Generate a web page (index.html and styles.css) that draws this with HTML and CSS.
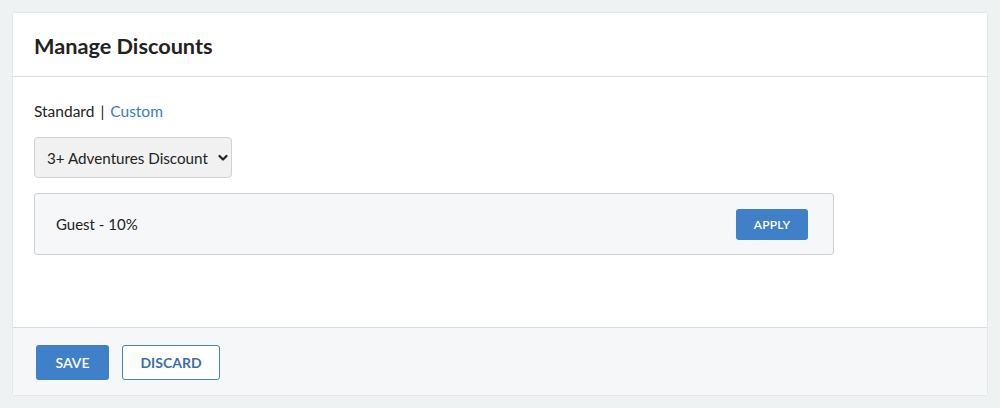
FILE: index.html
```html
<!DOCTYPE html>
<html lang="en">
<head>
<meta charset="utf-8">
<title>Manage Discounts</title>
<link rel="stylesheet" href="styles.css">
</head>
<body>
<div class="card">
  <div class="card-header">
    <h1 class="title">Manage Discounts</h1>
  </div>
  <div class="card-body">
    <div class="tabs">
      <span class="tab-active">Standard</span>
      <span class="sep">|</span>
      <a class="tab-link" href="#">Custom</a>
    </div>
    <div class="select-wrap">
      <select class="select">
        <option>3+ Adventures Discount</option>
      </select>
      <svg class="chev" width="10" height="8" viewBox="0 0 10 8"><path d="M1.5 2 L5 5.5 L8.5 2" fill="none" stroke="#222" stroke-width="2.2" stroke-linecap="round" stroke-linejoin="round"/></svg>
    </div>
    <div class="panel">
      <span class="panel-text">Guest - 10%</span>
      <button class="btn btn-apply">Apply</button>
    </div>
  </div>
  <div class="card-footer">
    <button class="btn btn-primary">Save</button>
    <button class="btn btn-outline">Discard</button>
  </div>
</div>
</body>
</html>
```
FILE: styles.css
```css
* { box-sizing: border-box; }
html, body { margin: 0; }
body {
  background: #eef2f3;
  padding: 12px 12px 12px 12px;
  font-family: Lato, "Open Sans", Arial, sans-serif;
  color: #222;
}
.card {
  width: 976px;
  height: 384px;
  background: #fff;
  border: 1px solid #e3e7ea;
  border-radius: 3px;
  display: flex;
  flex-direction: column;
}
.card-header {
  height: 64px;
  border-bottom: 1px solid #d9dcdf;
  display: flex;
  align-items: center;
  padding: 0 21px;
}
.title {
  margin: 0;
  font-size: 21.7px;
  font-weight: 700;
  color: #222;
  padding-top: 2px;
}
.card-body {
  flex: 1;
  padding: 24px 21px 0 21px;
}
.tabs {
  font-size: 15.5px;
  line-height: 20px;
  display: flex;
  gap: 6px;
  color: #222;
}
.tab-link {
  color: #3a7cc4;
  text-decoration: none;
}
.select-wrap {
  position: relative;
  width: 198px;
  margin-top: 16px;
}
.select {
  appearance: none;
  -webkit-appearance: none;
  width: 198px;
  height: 41px;
  border: 1px solid #cfd1d3;
  border-radius: 4px;
  background: #f1f1f1;
  font-family: Lato, "Open Sans", Arial, sans-serif;
  font-size: 15.2px;
  color: #222;
  padding: 0 10px 0 12px;
}
.chev {
  position: absolute;
  right: 4px;
  top: 17px;
  pointer-events: none;
}
.panel {
  margin-top: 15px;
  width: 800px;
  height: 62px;
  border: 1px solid #cdd0d3;
  border-radius: 3px;
  background: #f6f7f8;
  display: flex;
  align-items: center;
  justify-content: space-between;
  padding: 0 25px 0 21px;
}
.panel-text {
  font-size: 15px;
  color: #222;
}
.btn {
  font-family: Lato, "Open Sans", Arial, sans-serif;
  text-transform: uppercase;
  border-radius: 3px;
  cursor: pointer;
}
.btn-apply {
  width: 72px;
  height: 31px;
  background: #3f80c9;
  border: none;
  color: #fff;
  font-size: 12px;
  font-weight: 600;
  letter-spacing: 0.2px;
}
.card-footer {
  height: 68px;
  border-top: 1px solid #d9dcdf;
  background: #f5f7f9;
  display: flex;
  align-items: flex-start;
  gap: 13px;
  padding: 17px 23px 0 23px;
}
.btn-primary {
  width: 73px;
  height: 35px;
  background: #3f80c9;
  border: none;
  color: #fff;
  font-size: 14px;
  font-weight: 600;
}
.btn-outline {
  width: 98px;
  height: 35px;
  background: #fff;
  border: 1px solid #4a7fb8;
  color: #3c6ea6;
  font-size: 14px;
  font-weight: 700;
}
```
